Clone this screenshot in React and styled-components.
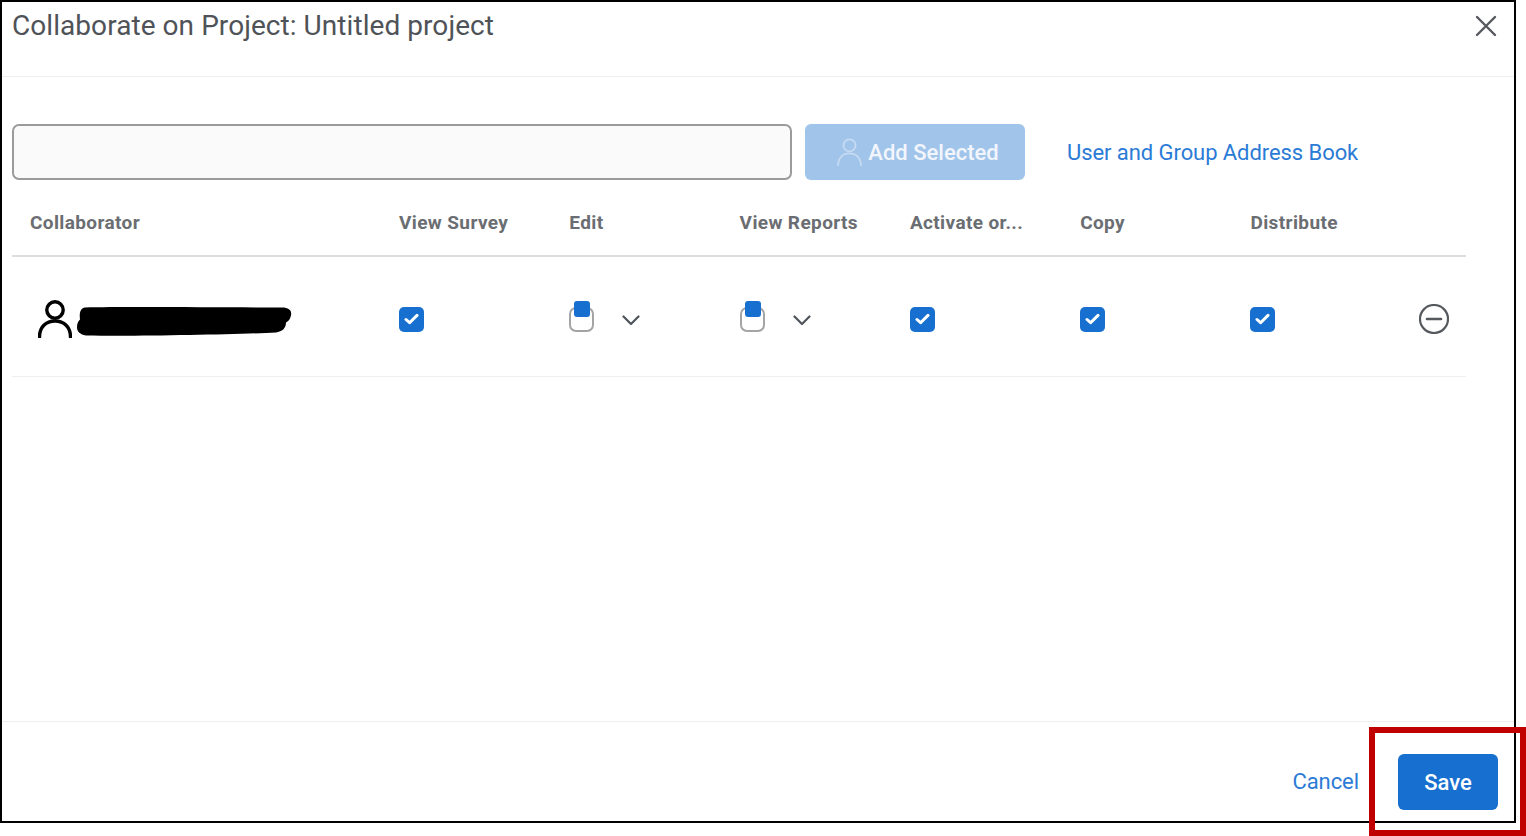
import React from "react";
import styled, { createGlobalStyle } from "styled-components";

const GlobalStyle = createGlobalStyle`
  html, body {
    margin: 0;
    padding: 0;
    background: #fff;
    overflow: hidden;
  }
  body {
    font-family: "Roboto", "Liberation Sans", sans-serif;
  }
`;

const columns = ["View Survey", "Edit", "View Reports", "Activate or...", "Copy", "Distribute"];
const access = ["checked", "partial", "partial", "checked", "checked", "checked"];

const UserIcon = ({ size, height, color, width }) => (
  <svg width={size} height={height} viewBox="0 0 34 38" fill="none" stroke={color} strokeWidth={width} strokeLinecap="round">
    <circle cx="17" cy="10" r="8.2" />
    <path d="M1.5 37c0-10 6.5-16 15.5-16s15.5 6 15.5 16" />
  </svg>
);

const Checkbox = () => (
  <CheckBox>
    <svg width="15" height="12" viewBox="0 0 15 12" fill="none" stroke="#fff" strokeWidth="3" strokeLinecap="round" strokeLinejoin="round">
      <path d="M2 6.5l3.6 3.2L13 2.4" />
    </svg>
  </CheckBox>
);

const Chevron = () => (
  <svg width="18" height="11" viewBox="0 0 18 11" fill="none" stroke="#4f545a" strokeWidth="2.2" strokeLinecap="round" strokeLinejoin="round">
    <path d="M1.5 1.5L9 9l7.5-7.5" />
  </svg>
);

const App = () => {
  return (
    <>
      <GlobalStyle />
      <Dialog>
        <Header>
          <Title>Collaborate on Project: Untitled project</Title>
          <CloseBtn aria-label="Close">
            <svg width="22" height="22" viewBox="0 0 22 22" fill="none" stroke="#55595e" strokeWidth="2.4" strokeLinecap="round">
              <path d="M2 2l18 18M20 2L2 20" />
            </svg>
          </CloseBtn>
        </Header>

        <Body>
          <Toolbar>
            <SearchInput />
            <AddButton disabled>
              <UserIcon size={25} height={28} color="#c6daf2" width={2.4} />
              Add Selected
            </AddButton>
            <TextLink>User and Group Address Book</TextLink>
          </Toolbar>

          <HeadRow>
            <HeadCell>Collaborator</HeadCell>
            {columns.map((name) => (
              <HeadCell key={name}>{name}</HeadCell>
            ))}
            <span />
          </HeadRow>

          <UserRow>
            <UserCell>
              <UserIcon size={34} height={38} color="#000" width={3.4} />
              <Redaction width="216" height="31" viewBox="0 0 216 31">
                <path
                  d="M9 1.5C50 0.5 150 1.5 206 1.5c7 0 10 3 9 8-1 4-3 6-5 7 0 6-4 9-10 10-40 2-140 4-190 3-6-1-9-4-9-8 0-4 1-6 3-8C3 6 5 2 9 1.5z"
                  fill="#000"
                />
              </Redaction>
            </UserCell>
            {access.map((state, i) =>
              state === "checked" ? (
                <AccessCell key={i}>
                  <Checkbox />
                </AccessCell>
              ) : (
                <AccessCell key={i}>
                  <PartialBox />
                  <ChevronWrap>
                    <Chevron />
                  </ChevronWrap>
                </AccessCell>
              )
            )}
            <RemoveBtn aria-label="Remove">
              <svg width="30" height="30" viewBox="0 0 30 30" fill="none" stroke="#55595e" strokeWidth="2.2" strokeLinecap="round">
                <circle cx="15" cy="15" r="14" />
                <path d="M8 15h14" strokeWidth="2.6" />
              </svg>
            </RemoveBtn>
          </UserRow>
        </Body>

        <Footer>
          <TextLink>Cancel</TextLink>
          <SaveButton>Save</SaveButton>
        </Footer>
      </Dialog>
      <Highlight />
    </>
  );
};

export default App;

const Dialog = styled.div`
  box-sizing: border-box;
  width: 1516px;
  height: 823px;
  border: 2px solid #000;
  background: #fff;
  display: flex;
  flex-direction: column;
`;

const Header = styled.div`
  box-sizing: border-box;
  height: 75px;
  flex-shrink: 0;
  border-bottom: 1px solid #eeeff0;
  padding: 6px 17px 0 10px;
  display: flex;
  justify-content: space-between;
  align-items: flex-start;
`;

const Title = styled.h1`
  margin: 0;
  font-size: 28px;
  line-height: 36px;
  font-weight: 400;
  letter-spacing: 0.06px;
  color: #4f5358;
`;

const CloseBtn = styled.button`
  border: none;
  background: transparent;
  padding: 0;
  margin-top: 7px;
  display: flex;
`;

const Body = styled.div`
  flex: 1;
  padding: 47px 48px 0 10px;
`;

const Toolbar = styled.div`
  display: flex;
  align-items: center;
  height: 56px;
`;

const SearchInput = styled.input`
  box-sizing: border-box;
  width: 780px;
  height: 56px;
  margin-right: 13px;
  border: 2px solid #9a9b9c;
  border-radius: 7px;
  background: #fafafa;
  outline: none;
`;

const AddButton = styled.button`
  box-sizing: border-box;
  width: 220px;
  height: 56px;
  margin-right: 42px;
  padding: 0 0 0 6px;
  border: none;
  border-radius: 6px;
  background: #a1c4ea;
  color: #f2f6fc;
  font-family: inherit;
  font-size: 22px;
  font-weight: 500;
  display: flex;
  align-items: center;
  justify-content: center;
  gap: 6px;
`;

const TextLink = styled.a`
  font-size: 22px;
  letter-spacing: -0.07px;
  color: #2b7bd6;
  cursor: pointer;
`;

const tableColumns = `387px repeat(6, 170.3px) 1fr`;

const HeadRow = styled.div`
  box-sizing: border-box;
  display: grid;
  grid-template-columns: ${tableColumns};
  align-items: center;
  height: 77px;
  padding-top: 10px;
  border-bottom: 2px solid #dcddde;
`;

const HeadCell = styled.div`
  font-size: 19px;
  font-weight: 700;
  letter-spacing: 0.38px;
  color: #6a6d71;
  &:first-child {
    padding-left: 18px;
  }
`;

const UserRow = styled.div`
  box-sizing: border-box;
  display: grid;
  grid-template-columns: ${tableColumns};
  align-items: center;
  height: 120px;
  padding-top: 5px;
  border-bottom: 1px solid #eeeff0;
`;

const UserCell = styled.div`
  display: flex;
  align-items: center;
  gap: 4px;
  padding-left: 26px;
`;

const Redaction = styled.svg`
  flex-shrink: 0;
  margin-top: 5px;
`;

const AccessCell = styled.div`
  display: flex;
  align-items: center;
`;

const CheckBox = styled.span`
  box-sizing: border-box;
  width: 25px;
  height: 25px;
  border-radius: 5px;
  background: #176fd0;
  display: flex;
  align-items: center;
  justify-content: center;
`;

const PartialBox = styled.span`
  position: relative;
  box-sizing: border-box;
  width: 25px;
  height: 25px;
  margin-top: 1px;
  border: 2px solid #a3a4a6;
  border-radius: 7px;
  background: #fff;

  &::after {
    content: "";
    position: absolute;
    left: 3px;
    top: -8px;
    width: 16px;
    height: 16px;
    border-radius: 3px;
    background: #176fd0;
  }
`;

const ChevronWrap = styled.span`
  display: flex;
  margin-left: 28px;
  margin-top: 2px;
`;

const RemoveBtn = styled.button`
  border: none;
  background: transparent;
  padding: 0;
  margin-left: -2px;
  display: flex;
`;

const Footer = styled.div`
  box-sizing: border-box;
  height: 100px;
  flex-shrink: 0;
  border-top: 1px solid #eeeff0;
  padding: 32px 16px 0 0;
  display: flex;
  justify-content: flex-end;
  align-items: flex-start;
  gap: 39px;
  line-height: 56px;
`;

const SaveButton = styled.button`
  width: 100px;
  height: 56px;
  border: none;
  border-radius: 6px;
  background: #176fd0;
  color: #fff;
  font-family: inherit;
  font-size: 22px;
  font-weight: 500;
`;

const Highlight = styled.div`
  position: absolute;
  box-sizing: border-box;
  left: 1369px;
  top: 727px;
  width: 157px;
  height: 109px;
  border: 6px solid #c00000;
  pointer-events: none;
`;
